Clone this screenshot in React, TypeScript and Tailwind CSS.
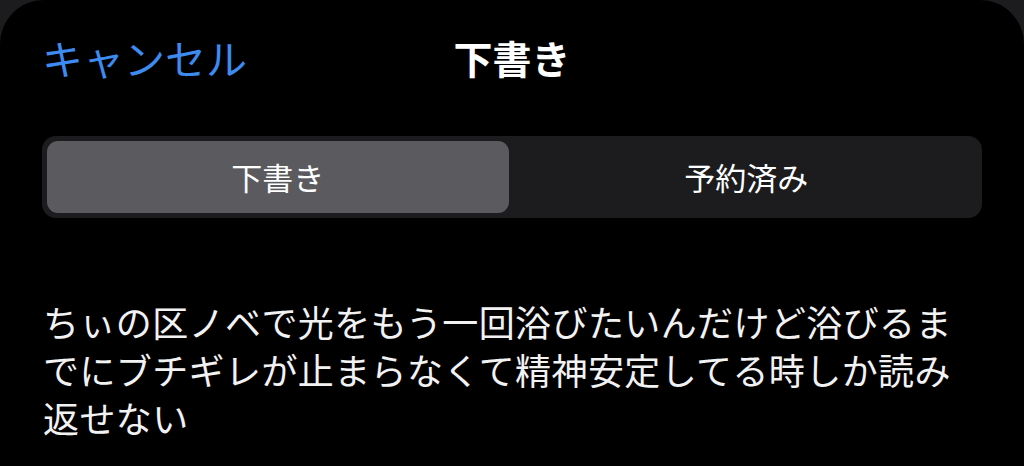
import { useState } from "react";

const FONT = '"Noto Sans CJK JP", "Noto Sans", sans-serif';

const TABS = ["下書き", "予約済み"];

export default function App() {
  const [tab, setTab] = useState(0);

  return (
    <div className="w-[1024px] h-[466px] bg-[#1c1c1e] overflow-hidden" style={{ fontFamily: FONT }}>
      <div className="h-full bg-black rounded-t-[44px] px-[42px]">
        {/* header */}
        <div className="grid grid-cols-3 items-center h-[114px]">
          <button className="justify-self-start text-left text-[41px] leading-none text-[#3d8bef]">
            キャンセル
          </button>
          <h1 className="justify-self-center text-[39px] leading-none font-bold text-white">下書き</h1>
          <div />
        </div>

        {/* segmented control */}
        <div className="mt-[22px] h-[82px] w-[940px] rounded-[14px] bg-[#1c1c1e] p-[5px] flex gap-[7px]">
          {TABS.map((t, i) => (
            <button
              key={t}
              onClick={() => setTab(i)}
              className={
                "flex-1 rounded-[11px] text-[31px] text-white flex items-center justify-center " +
                (tab === i ? "bg-[#5b5b5f]" : "")
              }
            >
              {t}
            </button>
          ))}
        </div>

        {/* draft body */}
        <p className="mt-[79px] w-[930px] text-[36px] leading-[48px] tracking-[0.4px] text-[#f2f2f2] ml-[1px]">
          ちぃの区ノベで光をもう一回浴びたいんだけど浴びるまでにブチギレが止まらなくて精神安定してる時しか読み返せない
        </p>
      </div>
    </div>
  );
}
